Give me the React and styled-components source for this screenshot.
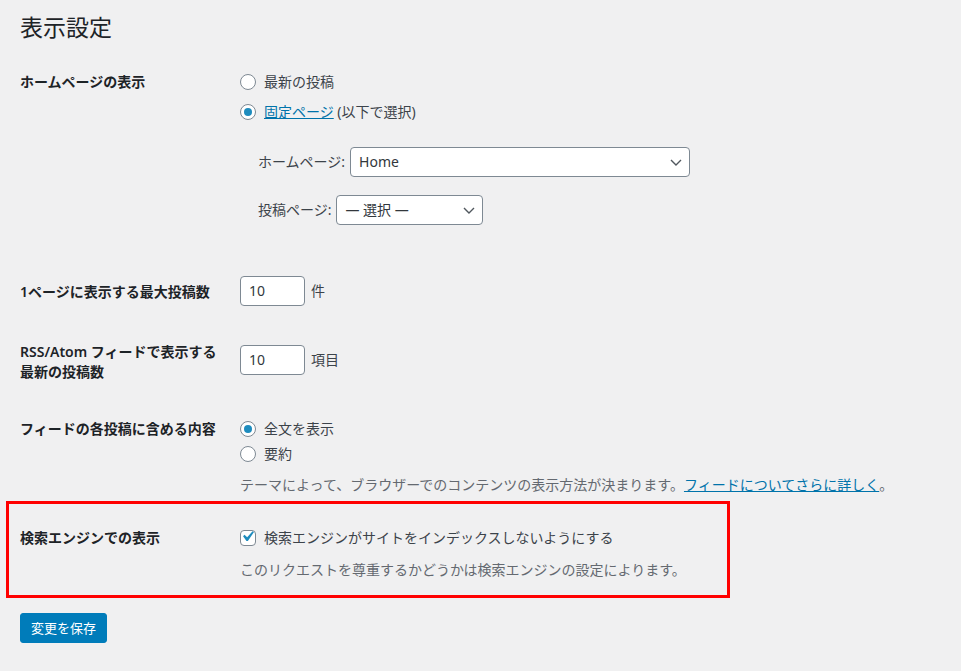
import React from 'react'
import styled, { createGlobalStyle } from 'styled-components'

const GlobalStyle = createGlobalStyle`
  body {
    margin: 0;
    background: #f0f0f1;
    font-family: "Noto Sans", "Noto Sans CJK JP", sans-serif;
    font-size: 14px;
    color: #3c434a;
  }
  * { box-sizing: border-box; }
`

export default function App() {
  return (
    <>
      <GlobalStyle />
      <Wrap>
        <Title>表示設定</Title>

        <Row bottom={36}>
          <Label top={21}>ホームページの表示</Label>
          <Field top={21}>
            <Option gap={10}>
              <Radio />
              <span>最新の投稿</span>
            </Option>
            <Option>
              <Radio checked />
              <span><Link href="#">固定ページ</Link> (以下で選択)</span>
            </Option>
            <SubFields>
              <SubRow>
                <SubLabel>ホームページ:</SubLabel>
                <Select width={340} value="Home" />
              </SubRow>
              <SubRow last>
                <SubLabel>投稿ページ:</SubLabel>
                <Select width={147} value="— 選択 —" />
              </SubRow>
            </SubFields>
          </Field>
        </Row>

        <Row bottom={15}>
          <Label top={21}>1ページに表示する最大投稿数</Label>
          <Field top={15}>
            <Inline>
              <NumberBox>10</NumberBox>
              <Unit>件</Unit>
            </Inline>
          </Field>
        </Row>

        <Row bottom={16}>
          <Label top={21}>RSS/Atom フィードで表示する<br />最新の投稿数</Label>
          <Field top={24}>
            <Inline>
              <NumberBox>10</NumberBox>
              <Unit>項目</Unit>
            </Inline>
          </Field>
        </Row>

        <Row>
          <Label top={21}>フィードの各投稿に含める内容</Label>
          <Field top={21}>
            <Option gap={5}>
              <Radio checked />
              <span>全文を表示</span>
            </Option>
            <Option>
              <Radio />
              <span>要約</span>
            </Option>
            <Description top={11}>
              テーマによって、ブラウザーでのコンテンツの表示方法が決まります。<Link href="#">フィードについてさらに詳しく</Link>。
            </Description>
          </Field>
        </Row>

        <Highlight>
          <Row bottom={15}>
            <Label top={24}>検索エンジンでの表示</Label>
            <Field top={24}>
              <Option>
                <CheckBox>
                  <svg viewBox="0 0 20 20" width="21" height="21">
                    <path d="M14.83 4.89l1.34.94-5.81 8.38H9.02L5.78 9.67l1.34-1.25 2.57 2.4z" fill="#1e8cbe" />
                  </svg>
                </CheckBox>
                <span>検索エンジンがサイトをインデックスしないようにする</span>
              </Option>
              <Description top={12}>
                このリクエストを尊重するかどうかは検索エンジンの設定によります。
              </Description>
            </Field>
          </Row>
        </Highlight>

        <SaveButton>変更を保存</SaveButton>
      </Wrap>
    </>
  )
}

function Select({ width, value }) {
  return (
    <SelectBox width={width}>
      <span>{value}</span>
      <Chevron viewBox="0 0 12 7" width="12" height="7">
        <path d="M1 1l5 5 5-5" fill="none" stroke="#50575e" strokeWidth="1.4" />
      </Chevron>
    </SelectBox>
  )
}

const Wrap = styled.div`
  padding: 0 20px 30px;
`

const Title = styled.h1`
  margin: 0 0 9px;
  padding-top: 12px;
  font-size: 23px;
  font-weight: 400;
  line-height: 30px;
  color: #1d2327;
`

const Row = styled.div`
  display: grid;
  grid-template-columns: 220px 1fr;
  align-items: start;
  padding-bottom: ${p => p.bottom || 0}px;
`

const Label = styled.div`
  padding-top: ${p => p.top}px;
  width: 210px;
  font-weight: 600;
  line-height: 20px;
  color: #1d2327;
`

const Field = styled.div`
  padding-top: ${p => p.top}px;
  line-height: 20px;
`

const Option = styled.label`
  display: flex;
  align-items: center;
  gap: 8px;
  height: 20px;
  margin-bottom: ${p => p.gap || 0}px;
  color: #3c434a;
`

const Radio = styled.span`
  position: relative;
  flex: none;
  width: 16px;
  height: 16px;
  border: 1px solid #7e8993;
  border-radius: 50%;
  background: #fff;

  &::after {
    content: '';
    display: ${p => (p.checked ? 'block' : 'none')};
    position: absolute;
    left: 3px;
    top: 3px;
    width: 8px;
    height: 8px;
    border-radius: 50%;
    background: #1e8cbe;
  }
`

const CheckBox = styled.span`
  flex: none;
  display: flex;
  align-items: center;
  justify-content: center;
  width: 16px;
  height: 16px;
  border: 1px solid #7e8993;
  border-radius: 4px;
  background: #fff;

  svg {
    margin: -3px 0 0 -1px;
    flex: none;
  }
`

const Link = styled.a`
  color: #0073aa;
  text-decoration: underline;
`

const SubFields = styled.div`
  margin-top: 25px;
  padding-left: 18px;
`

const SubRow = styled.div`
  display: flex;
  align-items: center;
  margin-bottom: ${p => (p.last ? 0 : 18)}px;
`

const SubLabel = styled.span`
  margin-right: 5px;
  color: #3c434a;
`

const SelectBox = styled.div`
  position: relative;
  display: flex;
  align-items: center;
  width: ${p => p.width}px;
  height: 30px;
  padding: 0 24px 0 8px;
  border: 1px solid #7e8993;
  border-radius: 4px;
  background: #fff;
  color: #32373c;
`

const Chevron = styled.svg`
  position: absolute;
  right: 7px;
  top: 11px;
`

const Inline = styled.div`
  display: flex;
  align-items: center;
`

const NumberBox = styled.div`
  display: flex;
  align-items: center;
  width: 65px;
  height: 30px;
  padding: 0 8px;
  border: 1px solid #7e8993;
  border-radius: 4px;
  background: #fff;
  color: #32373c;
`

const Unit = styled.span`
  margin-left: 6px;
`

const Description = styled.p`
  margin: ${p => p.top}px 0 0;
  color: #646970;
  line-height: 20px;
  white-space: nowrap;
`

const Highlight = styled.div`
  width: 724px;
  margin: 6px 0 0 -14px;
  padding-left: 11px;
  border: 3px solid #ff0000;
`

const SaveButton = styled.button`
  display: block;
  margin-top: 15px;
  height: 30px;
  padding: 0 10px;
  border: 1px solid #007cba;
  border-radius: 3px;
  background: #007cba;
  color: #fff;
  font-family: "Noto Sans", "Noto Sans CJK JP", sans-serif;
  font-size: 13px;
  line-height: 28px;
  cursor: pointer;
`
